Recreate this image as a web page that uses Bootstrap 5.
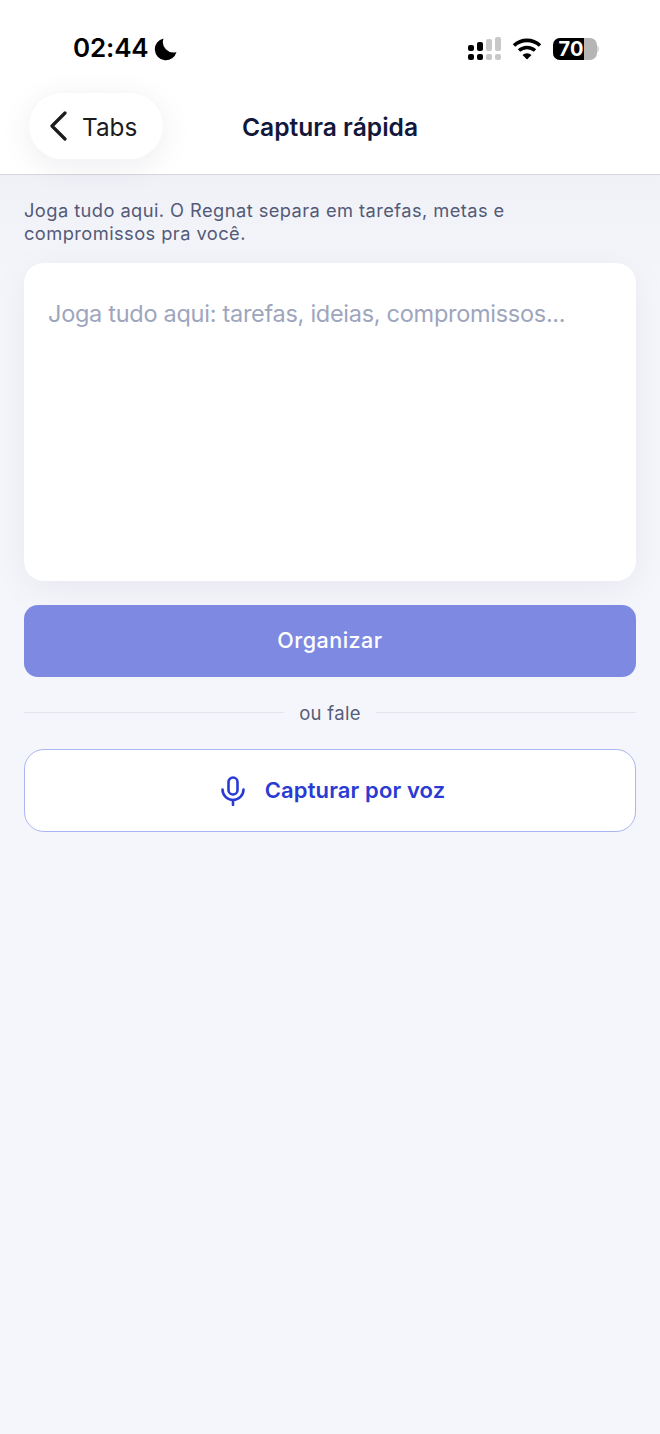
<!DOCTYPE html>
<html lang="pt-BR">
<head>
    <meta charset="UTF-8">
    <title>Captura rápida</title>
    <link href="https://cdn.jsdelivr.net/npm/bootstrap@5.3.3/dist/css/bootstrap.min.css" rel="stylesheet">
    <script src="https://cdn.jsdelivr.net/npm/bootstrap@5.3.3/dist/js/bootstrap.bundle.min.js"></script>
    <style>
        html, body { height: 100%; }
        body { font-family: Inter, "Liberation Sans", sans-serif; background: #f5f6fb; overflow: hidden; }
        .top-area { background: #fff; height: 175px; border-bottom: 1px solid #d6d7dc; position: relative; }
        .status-row { height: 81px; padding: 33px 61px 0 73px; }
        .status-icons { gap: 11px; }
        .clock-group { gap: 5px; }
        .clock { font-size: 26px; font-weight: 600; color: #000; line-height: 30px; letter-spacing: -.15px; }
        .head-row { height: 93px; position: relative; padding-left: 29px; padding-top: 12px; }
        .back-pill { width: 134px; height: 66px; border-radius: 33px; background: #fff; box-shadow: 0 6px 32px rgba(20, 25, 60, .08); padding: 0 0 0 19px; color: #1c1c1e; font-size: 24.3px; gap: 14px; border: 0; }
        .back-pill span { position: relative; top: 1px; }
        .head-title { position: absolute; left: 0; right: 0; top: 13px; height: 66px; line-height: 66px; text-align: center; font-size: 24.6px; font-weight: 600; color: #12183c; pointer-events: none; }
        .page-body { padding: 24px 24px 0; background: linear-gradient(#f0f1f7, #f5f6fb 120px); }
        .intro-text { font-size: 18.3px; line-height: 23px; color: #535a78; margin: 0 0 18px; letter-spacing: .43px; }
        .dump-box { display: block; width: 100%; height: 318px; border: 0; border-radius: 20px; padding: 36px 24px; font-size: 23.5px; line-height: 30px; letter-spacing: -.28px; color: #12183c; background: #fff; box-shadow: 0 8px 36px rgba(20, 25, 60, .06); resize: none; outline: 0; }
        .dump-box::placeholder { color: #9ea5bd; opacity: 1; }
        .organize-btn { height: 72px; margin-top: 24px; border: 0; border-radius: 14px; background: #7e8ae2; color: #fff; font-size: 21.5px; font-weight: 500; letter-spacing: .5px; }
        .organize-btn span { position: relative; top: -1px; }
        .divider-row { height: 72px; gap: 15px; color: #565d7a; font-size: 18.5px; letter-spacing: .3px; }
        .divider-row span { position: relative; top: 1px; }
        .divider-line { height: 1px; flex: 1; background: #e3e5ee; position: relative; top: -1px; }
        .voice-btn { height: 83px; border: 1px solid #aab6f4; border-radius: 20px; background: #fff; color: #2a3bd4; font-size: 22px; font-weight: 600; gap: 19px; letter-spacing: .12px; padding-left: 17px; }
    </style>
</head>
<body>

<div class="top-area">
    <div class="status-row d-flex justify-content-between">
        <div class="clock-group d-flex align-items-start">
            <span class="clock">02:44</span>
            <svg width="24" height="24" viewBox="0 0 24 24" class="mt-1"><path d="M9.5 1.5 A11 11 0 1 0 22.5 15 A10.5 10.5 0 0 1 9.5 1.5Z" fill="#000"/></svg>
        </div>
        <div class="status-icons d-flex align-items-start">
            <svg width="34" height="24" viewBox="0 0 34 24" class="mt-1">
                <rect x="1" y="8" width="6" height="6" rx="2" fill="#000"/>
                <rect x="10" y="5" width="6" height="9" rx="2" fill="#000"/>
                <rect x="19" y="2" width="6" height="12" rx="2" fill="#c8c8c8"/>
                <rect x="28" y="0" width="6" height="14" rx="2" fill="#c8c8c8"/>
                <rect x="1" y="17" width="6" height="6" rx="2" fill="#000"/>
                <rect x="10" y="17" width="6" height="6" rx="2" fill="#000"/>
                <rect x="19" y="17" width="6" height="6" rx="2" fill="#c8c8c8"/>
                <rect x="28" y="17" width="6" height="6" rx="2" fill="#c8c8c8"/>
            </svg>
            <svg width="30" height="24" viewBox="0 0 30 24" class="mt-1">
                <path d="M2 8.5 A19 19 0 0 1 28 8.5" fill="none" stroke="#000" stroke-width="3.6"/>
                <path d="M7 13.5 A12 12 0 0 1 23 13.5" fill="none" stroke="#000" stroke-width="3.6"/>
                <path d="M10.5 18 L15 22.5 L19.5 18 A6.5 6.5 0 0 0 10.5 18Z" fill="#000"/>
            </svg>
            <svg width="46" height="24" viewBox="0 0 46 24" class="mt-1">
                <rect x="0" y="1" width="44" height="22" rx="7" fill="#b5b5b5"/>
                <path d="M7 1 H31 V23 H7 A7 7 0 0 1 0 16 V8 A7 7 0 0 1 7 1Z" fill="#000"/>
                <path d="M44.500 8.500 C46 9.500 46 14.500 44.500 15.500Z" fill="#b5b5b5"/>
                <text x="18" y="19" text-anchor="middle" font-family="Inter, sans-serif" font-size="20" font-weight="700" fill="#fff">70</text>
            </svg>
        </div>
    </div>
    <div class="head-row">
        <button type="button" class="back-pill btn d-flex align-items-center">
            <svg width="20" height="30" viewBox="0 0 20 30"><path d="M17 2 L4 15 L17 28" fill="none" stroke="#1c1c1e" stroke-width="3.2" stroke-linecap="round" stroke-linejoin="round"/></svg>
            <span>Tabs</span>
        </button>
        <div class="head-title">Captura rápida</div>
    </div>
</div>

<main class="page-body">
    <p class="intro-text">Joga tudo aqui. O Regnat separa em tarefas, metas e<br>compromissos pra você.</p>
    <textarea class="dump-box" placeholder="Joga tudo aqui: tarefas, ideias, compromissos..."></textarea>
    <button type="button" class="organize-btn btn w-100 d-flex align-items-center justify-content-center"><span>Organizar</span></button>
    <div class="divider-row d-flex align-items-center">
        <div class="divider-line"></div>
        <span>ou fale</span>
        <div class="divider-line"></div>
    </div>
    <button type="button" class="voice-btn btn w-100 d-flex align-items-center justify-content-center">
        <svg width="26" height="30" viewBox="0 0 26 30" fill="none" stroke="#2a3bd4" stroke-width="2.6" stroke-linecap="round">
            <rect x="8.500" y="1.500" width="9" height="17" rx="4.500"/>
            <path d="M2.500 13.500 A10.500 10.500 0 0 0 23.500 13.500"/>
            <path d="M13 24 V29"/>
        </svg>
        <span>Capturar por voz</span>
    </button>
</main>

</body>
</html>
